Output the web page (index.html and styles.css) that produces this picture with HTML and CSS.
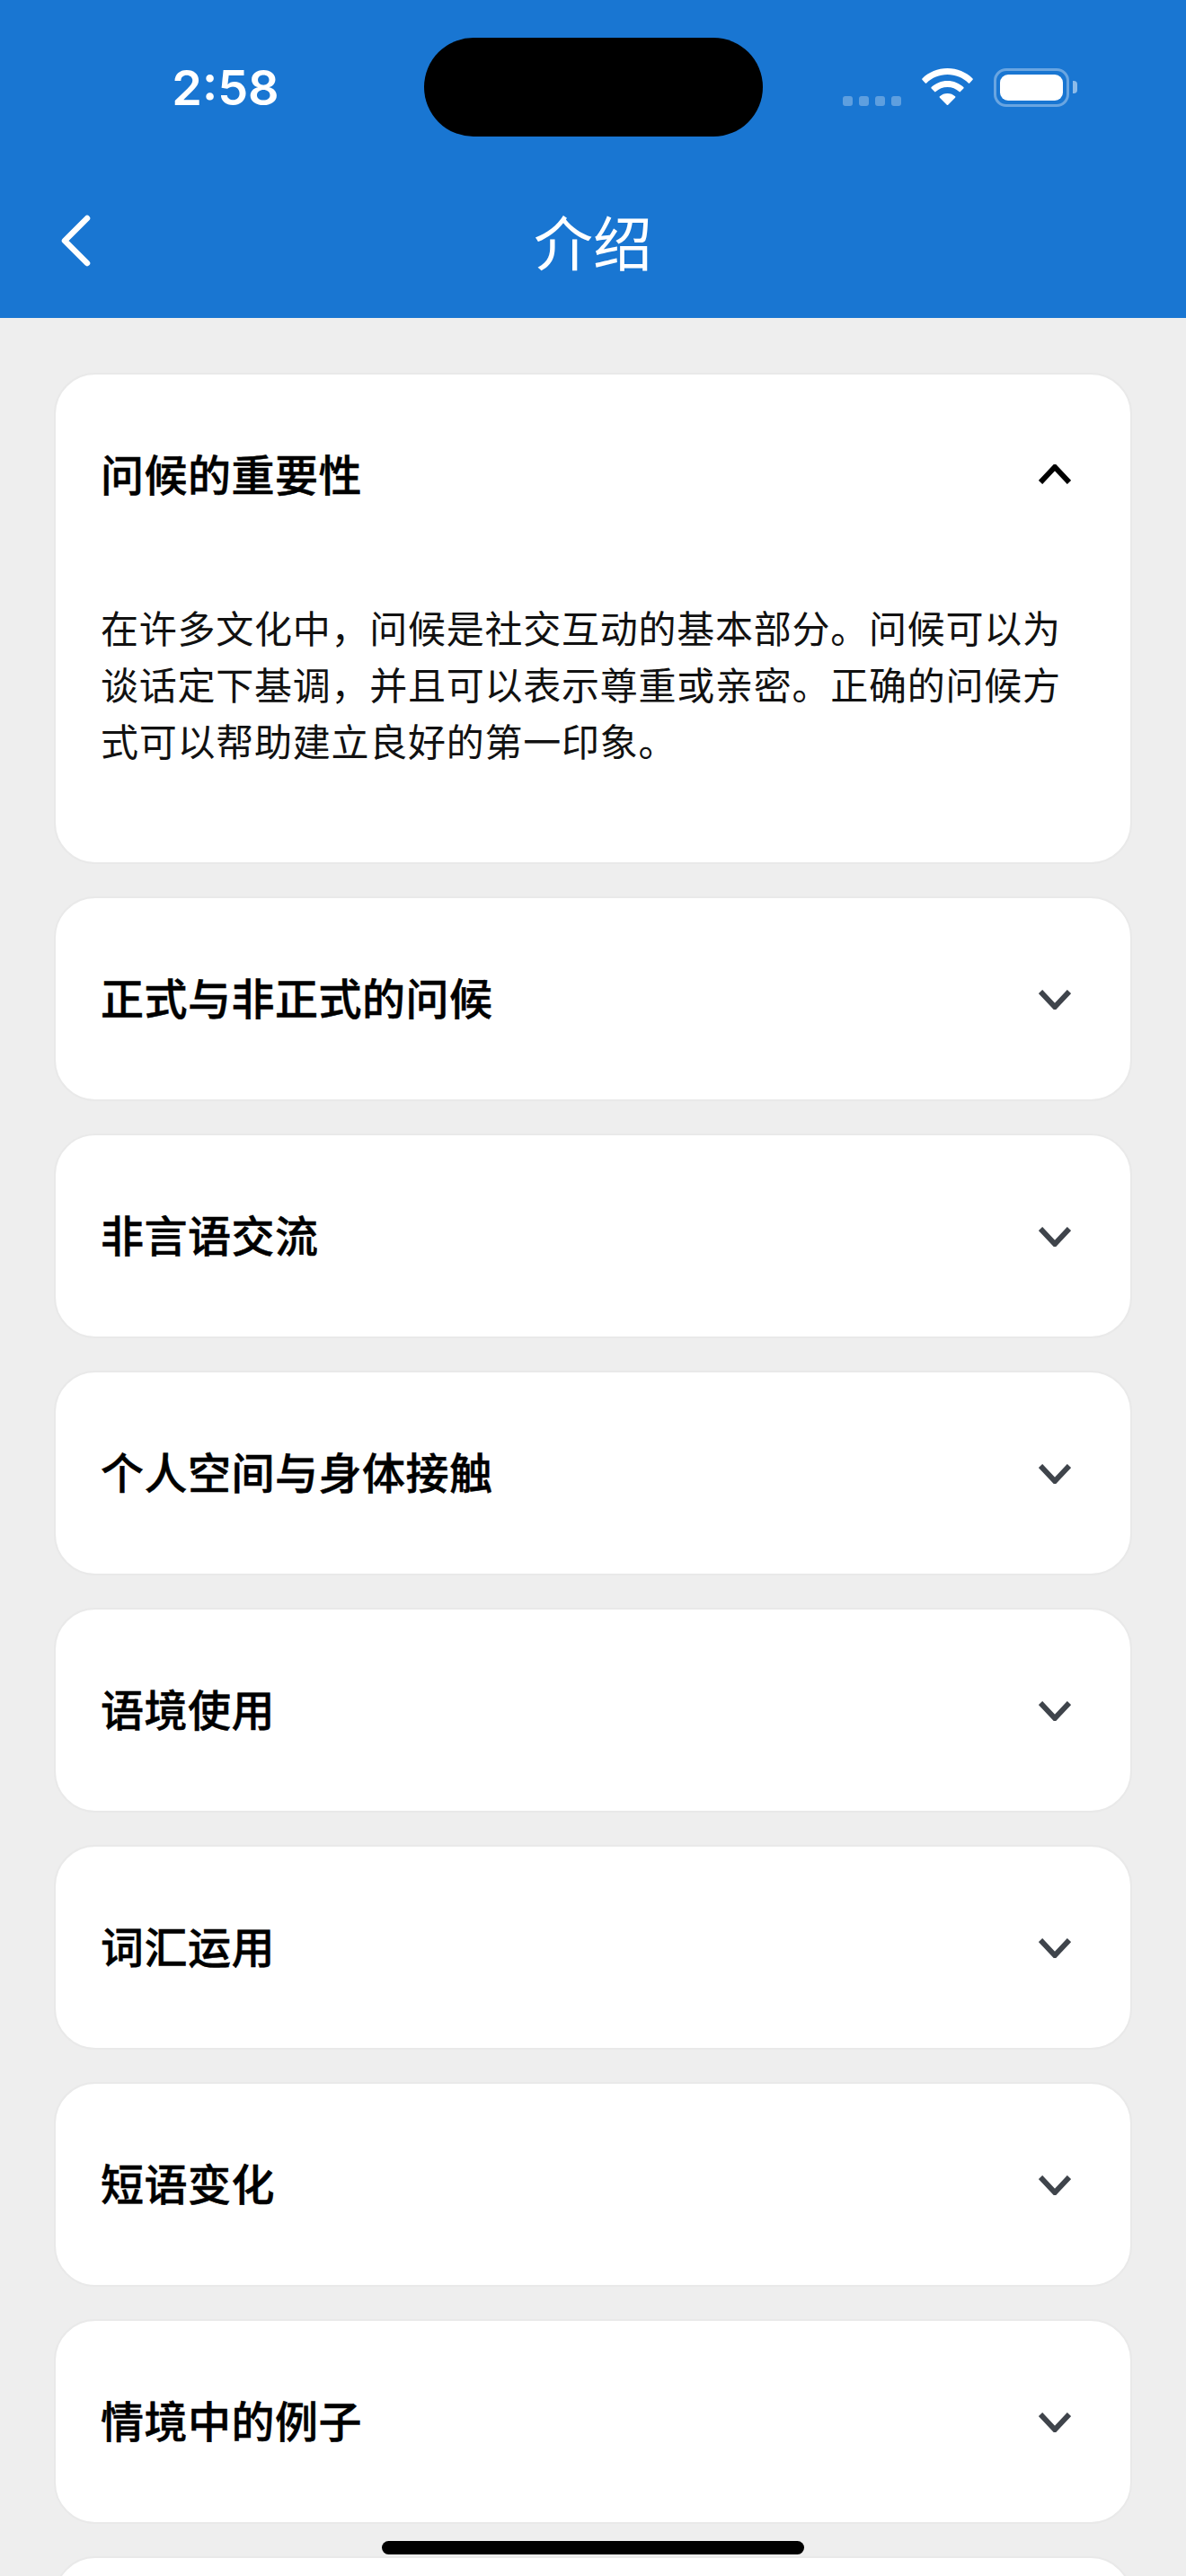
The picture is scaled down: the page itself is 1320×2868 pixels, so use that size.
FILE: index.html
```html
<!DOCTYPE html>
<html lang="zh-CN">
<head>
    <meta charset="UTF-8">
    <meta name="viewport" content="width=device-width, initial-scale=1.0">
    <title>介绍</title>
    <link rel="stylesheet" href="styles.css">
</head>
<body>
    <header class="header">
        <div class="status-bar">
            <span class="status-time">2:58</span>
            <div class="island"></div>
            <div class="status-icons">
                <div class="signal">
                    <span class="signal-dot"></span>
                    <span class="signal-dot"></span>
                    <span class="signal-dot"></span>
                    <span class="signal-dot"></span>
                </div>
                <svg class="wifi" viewBox="0 0 57 41" width="57" height="41">
                    <path fill="#fff" d="M28.5 0C17.6 0 7.8 4.3 0.4 11.4c-.4.4-.4 1 0 1.4l3.4 3.6c.4.4 1 .4 1.4 0C11.3 10.600 19.500 7.100 28.500 7.100s17.200 3.500 23.300 9.300c.4.4 1 .4 1.400 0l3.400-3.600c.4-.4.4-1 0-1.400C49.200 4.300 39.400 0 28.500 0z"/>
                    <path fill="#fff" d="M28.500 14c-6.900 0-13.200 2.700-17.900 7.100-.4.4-.4 1 0 1.400l3.500 3.600c.4.4 1 .4 1.400 0 3.400-3.100 8-5 13-5s9.600 1.900 13 5c.4.4 1 .4 1.400 0l3.500-3.600c.4-.4.4-1 0-1.400C41.700 16.700 35.400 14 28.500 14z"/>
                    <path fill="#fff" d="M28.500 28c-3.300 0-6.300 1.200-8.600 3.300-.4.4-.4 1 0 1.400l7.900 8c.4.400 1 .400 1.400 0l7.900-8c.4-.4.4-1 0-1.400C34.800 29.200 31.800 28 28.500 28z"/>
                </svg>
                <div class="battery">
                    <div class="battery-body"><div class="battery-level"></div></div>
                    <div class="battery-cap"></div>
                </div>
            </div>
        </div>
        <nav class="nav-bar">
            <svg class="back-icon" viewBox="0 0 36 58" width="36" height="58">
                <path d="M31 4 L6 29 L31 54" fill="none" stroke="#fff" stroke-width="6.500" stroke-linecap="round" stroke-linejoin="round"/>
            </svg>
            <h1 class="nav-title">介绍</h1>
        </nav>
    </header>

    <main class="accordion">
        <section class="card open">
            <div class="card-header">
                <h2 class="card-title">问候的重要性</h2>
                <svg class="chevron up" viewBox="0 0 36 22" width="36" height="22"><path d="M2 20 L18 3 L34 20"/></svg>
            </div>
            <p class="card-body">在许多文化中，问候是社交互动的基本部分。问候可以为谈话定下基调，并且可以表示尊重或亲密。正确的问候方式可以帮助建立良好的第一印象。</p>
        </section>
        <section class="card">
            <div class="card-header">
                <h2 class="card-title">正式与非正式的问候</h2>
                <svg class="chevron" viewBox="0 0 36 22" width="36" height="22"><path d="M2 2 L18 19 L34 2"/></svg>
            </div>
        </section>
        <section class="card">
            <div class="card-header">
                <h2 class="card-title">非言语交流</h2>
                <svg class="chevron" viewBox="0 0 36 22" width="36" height="22"><path d="M2 2 L18 19 L34 2"/></svg>
            </div>
        </section>
        <section class="card">
            <div class="card-header">
                <h2 class="card-title">个人空间与身体接触</h2>
                <svg class="chevron" viewBox="0 0 36 22" width="36" height="22"><path d="M2 2 L18 19 L34 2"/></svg>
            </div>
        </section>
        <section class="card">
            <div class="card-header">
                <h2 class="card-title">语境使用</h2>
                <svg class="chevron" viewBox="0 0 36 22" width="36" height="22"><path d="M2 2 L18 19 L34 2"/></svg>
            </div>
        </section>
        <section class="card">
            <div class="card-header">
                <h2 class="card-title">词汇运用</h2>
                <svg class="chevron" viewBox="0 0 36 22" width="36" height="22"><path d="M2 2 L18 19 L34 2"/></svg>
            </div>
        </section>
        <section class="card">
            <div class="card-header">
                <h2 class="card-title">短语变化</h2>
                <svg class="chevron" viewBox="0 0 36 22" width="36" height="22"><path d="M2 2 L18 19 L34 2"/></svg>
            </div>
        </section>
        <section class="card">
            <div class="card-header">
                <h2 class="card-title">情境中的例子</h2>
                <svg class="chevron" viewBox="0 0 36 22" width="36" height="22"><path d="M2 2 L18 19 L34 2"/></svg>
            </div>
        </section>
        <section class="card">
            <div class="card-header"></div>
        </section>
    </main>

    <div class="home-indicator"></div>
</body>
</html>
```

FILE: styles.css
```css
* {
    margin: 0;
    padding: 0;
    box-sizing: border-box;
}

html, body {
    height: 2868px;
    overflow: hidden;
}

body {
    position: relative;
    background: #eeeeee;
    font-family: "Noto Sans CJK SC", "Noto Sans", sans-serif;
    color: #000;
}

.header {
    height: 354px;
    background: #1976d2;
    padding-top: 42px;
}

.status-bar {
    display: flex;
    align-items: center;
    height: 110px;
}

.status-time {
    width: 472px;
    padding-left: 30px;
    text-align: center;
    font-family: Inter, "Liberation Sans", sans-serif;
    font-size: 54px;
    font-weight: 600;
    color: #fff;
}

.island {
    width: 377px;
    height: 110px;
    background: #000;
    border-radius: 55px;
}

.status-icons {
    display: flex;
    align-items: flex-start;
    margin-left: 89px;
}

.signal {
    display: flex;
    gap: 7px;
    margin-top: 31px;
}

.signal-dot {
    width: 11px;
    height: 11px;
    border-radius: 3px;
    background: rgba(255, 255, 255, 0.3);
}

.wifi {
    margin-left: 23px;
}

.battery {
    display: flex;
    align-items: center;
    margin-left: 23px;
    height: 43px;
}

.battery-body {
    width: 84px;
    height: 43px;
    padding: 4px;
    border: 3px solid rgba(255, 255, 255, 0.35);
    border-radius: 14px;
}

.battery-level {
    width: 100%;
    height: 100%;
    background: #fff;
    border-radius: 9px;
}

.battery-cap {
    width: 5px;
    height: 14px;
    margin-left: 4px;
    background: rgba(255, 255, 255, 0.5);
    border-radius: 0 4px 4px 0;
}

.nav-bar {
    position: relative;
    display: flex;
    align-items: center;
    justify-content: center;
    height: 116px;
    margin-top: 57px;
}

.back-icon {
    position: absolute;
    left: 66px;
    top: 30px;
}

.nav-title {
    font-size: 66px;
    font-weight: 400;
    color: #fff;
    line-height: 1;
}

.accordion {
    display: flex;
    flex-direction: column;
    gap: 36px;
    padding: 61px 60px 0;
}

.card {
    background: #fff;
    border: 2px solid #e9e9e9;
    border-radius: 46px;
    padding: 0 48px 0 50px;
    min-height: 228px;
}

.card-header {
    display: flex;
    align-items: center;
    justify-content: space-between;
    height: 224px;
}

.card-title {
    font-size: 48px;
    font-weight: 500;
    line-height: 1.2;
    letter-spacing: 0.5px;
    padding-bottom: 4px;
    -webkit-text-stroke: 0.5px #000;
}

.chevron {
    margin: 2px 18px 0 0;
    fill: none;
    stroke: #3f444b;
    stroke-width: 6;
}

.chevron.up {
    margin-top: -2px;
    stroke: #000;
}

.card-body {
    font-size: 42px;
    letter-spacing: 0.75px;
    line-height: 63px;
    font-weight: 400;
    color: #111;
    padding: 25px 0 105px;
}

.home-indicator {
    position: absolute;
    left: 425px;
    top: 2829px;
    width: 470px;
    height: 15px;
    background: #000;
    border-radius: 8px;
}
```
